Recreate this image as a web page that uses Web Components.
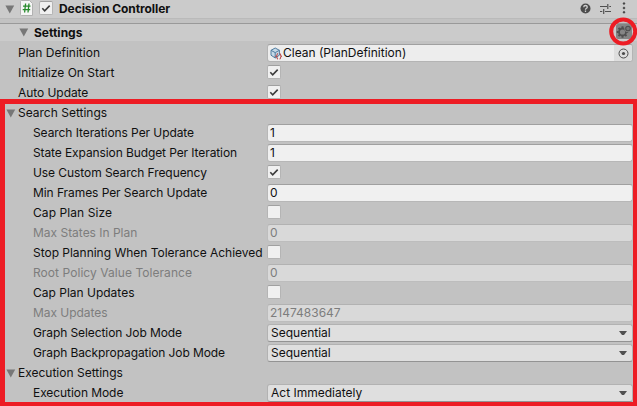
<!DOCTYPE html>
<html lang="en">
<head>
<meta charset="utf-8">
<title>Decision Controller</title>
<style>
html,body{margin:0;height:100%;overflow:hidden;background:#c2c2c2}
body{font:12px/20px Inter,"Liberation Sans",sans-serif;color:#101010}
</style>
</head>
<body>
<decision-inspector></decision-inspector>
<script>
const define = (name, html, setup) => customElements.define(name, class extends HTMLElement {
  connectedCallback() {
    if (this.shadowRoot) return;
    this.attachShadow({mode: 'open'}).innerHTML = html;
    if (setup) setup(this, this.shadowRoot);
  }
});

define('fold-arrow', `<style>:host{display:block;width:10px;height:9px;flex:none}svg{display:block}</style>
<svg width="10" height="9"><path d="M.4.4h8.8L4.8 8.4z" fill="#777"/></svg>`);

define('check-box', `<style>
:host{display:block;box-sizing:border-box;width:14px;height:14px;flex:none;background:#f0f0f0;border:1px solid #b4b4b4;border-top-color:#a0a0a0;border-radius:2px;margin-bottom:2px}
svg{display:none;width:12px;height:12px}:host([checked]) svg{display:block}</style>
<svg viewBox="0 0 12 12"><path d="M2.3 6.3l2.4 2.5L9.7 3.6" fill="none" stroke="#3c3c3c" stroke-width="1.6"/></svg>`);

define('text-field', `<style>
:host{display:flex;align-items:center;box-sizing:border-box;height:18px;width:366px;flex:none;padding-left:2px;background:#f0f0f0;border:1px solid #b7b7b7;border-top-color:#a0a0a0;border-radius:3px;line-height:16px;white-space:pre}
:host([off]){background:#d9d9d9;border-color:#bdbdbd;border-top-color:#b2b2b2;color:#7d7d7d}
</style><slot></slot>`);

define('select-field', `<style>
:host{display:flex;align-items:center;box-sizing:border-box;height:18px;width:366px;flex:none;padding:0 5px 0 3px;background:#dfdfdf;border:1px solid #b2b2b2;border-bottom-color:#939393;border-radius:3px;line-height:16px}
span{flex:1;margin-bottom:1px}</style><span><slot></slot></span>
<svg width="8" height="4"><path d="M0 0h8L5 4H3z" fill="#505050"/></svg>`);

define('object-field', `<style>
:host{display:flex;align-items:center;box-sizing:border-box;height:18px;width:366px;flex:none;padding-left:2px;background:#ededed;border:1px solid #b4b4b4;border-top-color:#a0a0a0;border-radius:3px;line-height:16px}
span{flex:1;padding-left:1px}.pick{display:flex;align-items:center;justify-content:center;width:18px;height:16px;background:#dedede;border-radius:0 2px 2px 0}</style>
<svg width="12" height="13" viewBox="0 0 12 13"><path d="M1 3.3L5.2 1l4.2 2.3v4.9L5.2 11 1 8.2z" fill="#c6d9e7" stroke="#4f7ca0"/><path d="M1 3.3l4.2 2.3 4.2-2.3M5.2 5.6V11" fill="none" stroke="#4f7ca0"/><path d="M8 6.5q-1 .2-1 1.5 0 1-1 1.3 1 .3 1 1.3 0 1.2 1 1.5M9.6 6.5q1 .2 1 1.5 0 1 1 1.3-1 .3-1 1.3 0 1.2-1 1.5" fill="none" stroke="#b84b4b" stroke-width="1.1"/></svg>
<span><slot></slot></span><div class="pick"><svg width="11" height="11"><circle cx="5.5" cy="5.5" r="4.5" fill="none" stroke="#4b4b4b"/><circle cx="5.5" cy="5.5" r="1.6" fill="#4b4b4b"/></svg></div>`);

define('property-row', `<style>
:host{display:flex;height:20px;align-items:center}
span{box-sizing:border-box;width:267px;padding-left:18px;flex:none;white-space:nowrap}
:host([nested]) span{padding-left:33px}:host([off]) span{color:#7d7d7d}
</style><span></span><slot></slot>`, (host, root) => {
  const s = root.querySelector('span');
  s.textContent = host.getAttribute('label');
  const w = host.getAttribute('w');
  if (w) {
    const r = document.createRange(); r.selectNodeContents(s);
    s.style.letterSpacing = (w - r.getBoundingClientRect().width) / s.textContent.length + 'px';
  }
});

define('fold-row', `<style>:host{display:flex;height:20px;align-items:center;padding-left:6px;gap:2px}</style><fold-arrow></fold-arrow><span><slot></slot></span>`);

define('component-header', `<style>
:host{display:flex;align-items:center;box-sizing:border-box;height:19px;padding:0 10px 0 5px;background:#cbcbcb;border-bottom:1px solid #bababa;font-weight:700;letter-spacing:-.07px}
.script{margin:0 0 2px 5px}check-box{margin:0 6px 2px 6px}.title{flex:1}.tools{display:flex;align-items:center;gap:9px;margin-bottom:2px}svg{display:block}
</style><fold-arrow></fold-arrow>
<svg class="script" width="13" height="16"><path d="M1.5.5h8l3 3v12H1.5q-1 0-1-1v-13q0-1 1-1z" fill="#f5f5f5" stroke="#b1b1b1"/><path d="M5.6 3.5l-1 9M9 3.5l-1 9M3 6.2h7.5M2.7 9.6h7.5" stroke="#278a2c" stroke-width="1.3"/></svg>
<check-box checked></check-box><span class="title"><slot></slot></span>
<div class="tools">
<svg width="11" height="11"><circle cx="5.5" cy="5.5" r="5" fill="#4b4b4b"/><path d="M3.7 4.2Q3.8 2.5 5.5 2.5T7.3 4.1Q7.3 5 6.2 5.5 5.5 5.9 5.5 6.7M5.5 7.6v1.3" fill="none" stroke="#d0d0d0" stroke-width="1.3"/></svg>
<svg width="12" height="11"><path d="M0 3.5h7M9.3 3.5H11M7.8 1v5M0 8.5h2.3M5 8.5h6M3.7 6v5" fill="none" stroke="#505050" stroke-width="1.2"/></svg>
<svg width="6" height="12"><path d="M3 0l1.5 1.5L3 3 1.5 1.5zM3 4.4l1.5 1.5L3 7.4 1.5 5.9zM3 8.8l1.5 1.5L3 11.8 1.5 10.3z" fill="#464646"/></svg>
</div>`);

define('settings-header', `<style>
:host{display:flex;align-items:center;box-sizing:border-box;height:18px;margin-top:4px;padding-left:19px;gap:5px;background:#cbcbcb;border-top:1px solid #999;font-weight:700}
fold-arrow{margin-bottom:1px}
</style><fold-arrow></fold-arrow><span><slot></slot></span>`);

define('gear-highlight', `<style>:host{position:absolute;left:608px;top:17px;width:29px;height:29px}svg{display:block}</style>
<svg width="29" height="29"><rect x="8" y="7" width="16" height="15" rx="2" fill="#858585"/>
<circle cx="14.5" cy="15" r="3.5" fill="none" stroke="#505050" stroke-width="1.8"/><path d="M14.5 9.3v2M14.5 18.7v2M8.8 15h2M18.2 15h2M10.5 11l1.4 1.4M10.5 19l1.4-1.4M18.5 19l-1.4-1.4" stroke="#505050" stroke-width="2"/>
<circle cx="20" cy="11.5" r="3.7" fill="#858585"/><circle cx="20" cy="11.5" r="2.3" fill="#777" stroke="#505050" stroke-width="1.1"/>
<circle cx="15.2" cy="14.5" r="12" fill="none" stroke="#ed1c24" stroke-width="4"/></svg>`);

define('red-frame', `<style>:host{position:absolute;box-sizing:border-box;left:0;top:99px;width:637px;height:307px;border:solid #ed1c24;border-width:5px 4px 4px 5px}</style>`);

define('decision-inspector', `<style>
:host{display:block;position:relative;width:637px;height:406px;overflow:hidden}.rows{padding-top:2px}</style>
<component-header>Decision Controller</component-header>
<settings-header>Settings</settings-header>
<div class="rows">
<property-row label="Plan Definition" w="82"><object-field>Clean (PlanDefinition)</object-field></property-row>
<property-row label="Initialize On Start" w="96.5"><check-box checked></check-box></property-row>
<property-row label="Auto Update" w="70.3"><check-box checked></check-box></property-row>
<fold-row>Search Settings</fold-row>
<property-row nested label="Search Iterations Per Update" w="161"><text-field>1</text-field></property-row>
<property-row nested label="State Expansion Budget Per Iteration" w="204"><text-field>1</text-field></property-row>
<property-row nested label="Use Custom Search Frequency" w="173.8"><check-box checked></check-box></property-row>
<property-row nested label="Min Frames Per Search Update" w="174.3"><text-field>0</text-field></property-row>
<property-row nested label="Cap Plan Size" w="79"><check-box></check-box></property-row>
<property-row nested off label="Max States In Plan" w="104.3"><text-field off>0</text-field></property-row>
<property-row nested label="Stop Planning When Tolerance Achieved" w="229.6"><check-box></check-box></property-row>
<property-row nested off label="Root Policy Value Tolerance" w="159"><text-field off>0</text-field></property-row>
<property-row nested label="Cap Plan Updates" w="101.5"><check-box></check-box></property-row>
<property-row nested off label="Max Updates" w="74.5"><text-field off>2147483647</text-field></property-row>
<property-row nested label="Graph Selection Job Mode" w="149"><select-field>Sequential</select-field></property-row>
<property-row nested label="Graph Backpropagation Job Mode" w="192"><select-field>Sequential</select-field></property-row>
<fold-row>Execution Settings</fold-row>
<property-row nested label="Execution Mode" w="90.3"><select-field>Act Immediately</select-field></property-row>
</div>
<red-frame></red-frame>
<gear-highlight></gear-highlight>`);
</script>
</body>
</html>
